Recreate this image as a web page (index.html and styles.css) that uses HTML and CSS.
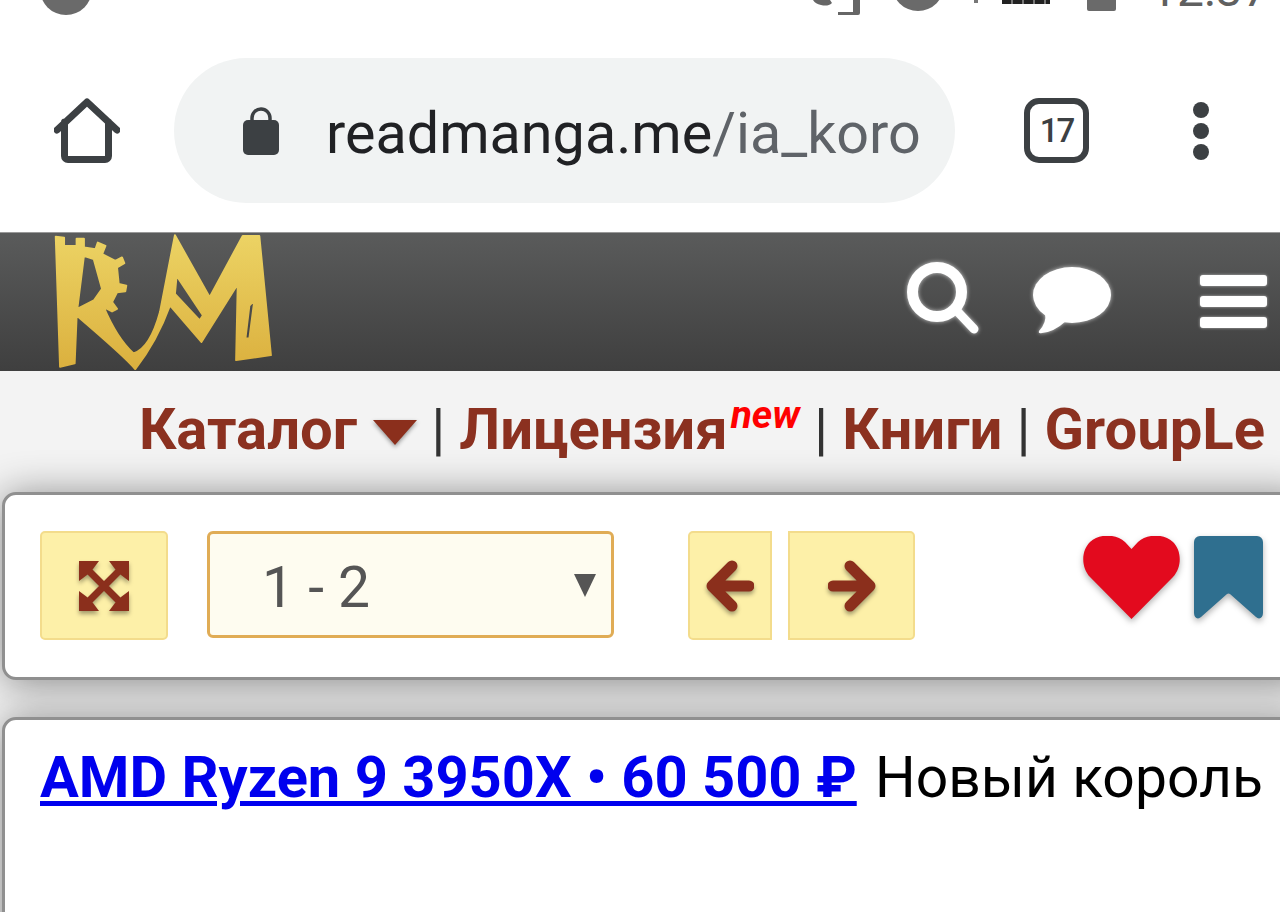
FILE: index.html
```html
<!DOCTYPE html>
<html lang="ru">
<head>
    <meta charset="UTF-8">
    <meta name="viewport" content="width=device-width, initial-scale=1.0">
    <title>readmanga.me</title>
    <link rel="stylesheet" href="styles.css">
</head>
<body>
    <div class="status-bar">
        <span class="status-dot status-dot-left"></span>
        <svg class="status-sim" viewBox="0 0 47 15"><path d="M0 0H17L19 3C16 6 12 6 8 5 4 4 2 3 0 0ZM40 0H47V13Q47 15 45 15H25V12H40Z" fill="#666"/></svg>
        <span class="status-dot status-dot-right"></span>
        <span class="status-tick"></span>
        <span class="status-signal"></span>
        <span class="status-battery"></span>
        <span class="status-time">12:37</span>
    </div>

    <div class="toolbar">
        <svg class="home-icon" viewBox="0 0 66 66"><path d="M3 32 33 4 63 32M10.500 24V58a3.500 3.500 0 0 0 3.500 3.500H51a3.500 3.500 0 0 0 3.500-3.500V24" fill="none" stroke="#3c4043" stroke-width="7" stroke-linecap="round" stroke-linejoin="round"/></svg>
        <div class="url-pill">
            <svg class="lock-icon" viewBox="0 0 38 48"><path d="M10 14V11a9 9 0 0 1 18 0v3" fill="none" stroke="#3c4043" stroke-width="3.500"/><rect x="1" y="13" width="36" height="35" rx="5" fill="#3c4043"/></svg>
            <span class="url-text"><span class="url-host">readmanga.me</span>/ia_koro</span>
        </div>
        <div class="tabs-count">17</div>
        <div class="menu-dots"><span></span><span></span><span></span></div>
    </div>

    <header class="site-header">
        <svg class="logo" viewBox="150 21 675 417">
            <defs>
                <linearGradient id="logoFill" x1="0" y1="0" x2="0" y2="1">
                    <stop offset="0" stop-color="#ecd364"/>
                    <stop offset="1" stop-color="#dbb03e"/>
                </linearGradient>
            </defs>
            <path fill="url(#logoFill)" stroke="url(#logoFill)" stroke-width="6" stroke-linejoin="round" fill-rule="evenodd" d="M165 32 190 35 190 60 228 60 228 38 250 38 250 65 285 70 292 50 315 60 305 85 345 105 365 95 372 112 350 125 355 175 378 180 375 197 350 200 335 230 350 250 335 258 310 245Q350 340 400 385 450 370 480 260L525 28 630 215 730 30 780 30 815 390 710 405 715 175 605 350 510 240Q470 350 405 432 380 400 228 270L222 415 178 425ZM250 90 280 100 305 190 280 225 230 250ZM530 150 610 270 600 285 525 205ZM765 225 750 340 738 340 750 240Z"/>
        </svg>
        <svg class="search-icon" viewBox="0 0 76 76"><circle cx="32" cy="30" r="24.500" fill="none" stroke="#fff" stroke-width="11"/><path d="M51 48 69 67" stroke="#fff" stroke-width="9" stroke-linecap="round"/></svg>
        <svg class="chat-icon" viewBox="0 0 82 72"><ellipse cx="42" cy="29" rx="39" ry="28" fill="#fff"/><path d="M15 48Q17 56 9 65 8 68 12 67 24 66 36 55Z" fill="#fff"/></svg>
        <div class="burger"><span></span><span></span><span></span></div>
    </header>

    <nav class="site-nav">
        <a href="#">Каталог</a>
        <span class="caret"></span>
        <span class="sep">|</span>
        <a href="#">Лицензия</a><sup class="new-mark">new</sup>
        <span class="sep">|</span>
        <a href="#">Книги</a>
        <span class="sep">|</span>
        <a href="#">GroupLe</a>
    </nav>

    <main class="content">
        <section class="card reader-bar">
            <button class="btn btn-full">
                <svg class="expand-icon" viewBox="0 0 50 50">
                    <path d="M8 8 42 42M42 8 8 42" stroke="#8b2f1c" stroke-width="7"/>
                    <path d="M0 0H20L14 8 8 14 0 20ZM50 0H30L36 8 42 14 50 20ZM0 50H20L14 42 8 36 0 30ZM50 50H30L36 42 42 36 50 30Z" fill="#8b2f1c"/>
                </svg>
            </button>
            <div class="select-wrap">
                <select class="page-select"><option>1 - 2</option></select>
            </div>
            <button class="btn btn-prev">
                <svg class="arrow-icon" viewBox="0 0 48 52"><path d="M26 6 6 26 26 46M6 26H43" fill="none" stroke="#8b2f1c" stroke-width="11" stroke-linecap="round" stroke-linejoin="round"/></svg>
            </button>
            <button class="btn btn-next">
                <svg class="arrow-icon" viewBox="0 0 48 52"><path d="M22 6 42 26 22 46M42 26H5" fill="none" stroke="#8b2f1c" stroke-width="11" stroke-linecap="round" stroke-linejoin="round"/></svg>
            </button>
            <svg class="heart-icon" viewBox="0 0 97 83"><path d="M48.500 83 7 41C-2 31-2 15 7 6 17-3 33-2 42 6L48.500 13 55 6C64-2 80-3 90 6 99 15 99 31 90 41Z" fill="#e30a1e"/></svg>
            <svg class="bookmark-icon" viewBox="0 0 69 83"><path d="M6 0H63A6 6 0 0 1 69 6V77C69 82 65 84 62 81L36 58Q34.500 57 33 58L7 81C4 84 0 82 0 77V6A6 6 0 0 1 6 0Z" fill="#2f6f8f"/></svg>
        </section>

        <section class="card promo">
            <a class="promo-link" href="#">AMD Ryzen 9 3950X • 60 500 ₽</a> <span class="promo-text">Новый король</span>
        </section>
    </main>
</body>
</html>
```

FILE: styles.css
```css
html, body {
    margin: 0;
    height: 912px;
    overflow: hidden;
}
body {
    background: #fff;
    font-family: Roboto, "Liberation Sans", sans-serif;
}

/* phone status bar, only its lower edge is in the picture */
.status-bar {
    display: flex;
    align-items: flex-end;
    height: 16px;
    overflow: hidden;
}
.status-dot {
    width: 52px;
    height: 52px;
    border-radius: 50%;
    background: #6a6a6a;
}
.status-dot-left {
    margin: 0 721px 1px 40px;
}
.status-sim {
    width: 47px;
    height: 15px;
    margin-bottom: 1px;
}
.status-dot-right {
    margin: 0 30px 5px 32px;
}
.status-tick {
    width: 4px;
    height: 3px;
    margin: 0 24px 13px 0;
    background: #777;
}
.status-signal {
    width: 48px;
    height: 4px;
    margin-bottom: 12px;
    background: repeating-linear-gradient(90deg, #222 0 9px, #777 9px 11px);
}
.status-battery {
    width: 29px;
    height: 30px;
    margin: 0 34px 5px 37px;
    background: #6a6a6a;
    border-radius: 2px;
}
.status-time {
    margin-bottom: 2px;
    font-size: 48px;
    line-height: 48px;
    color: #606060;
}

.toolbar {
    display: flex;
    align-items: center;
    height: 145px;
    margin-top: 42px;
    margin-bottom: 29px;
}
.home-icon {
    width: 66px;
    height: 66px;
    margin: 0 54px;
}
.url-pill {
    display: flex;
    align-items: center;
    width: 781px;
    height: 145px;
    border-radius: 73px;
    background: #f1f3f3;
    box-sizing: border-box;
    padding-left: 68px;
    overflow: hidden;
}
.lock-icon {
    width: 38px;
    height: 48px;
    margin-right: 46px;
}
.url-text {
    margin-top: 6px;
    font-size: 57.5px;
    color: #5f6368;
    white-space: nowrap;
}
.url-host {
    color: #202124;
}
.tabs-count {
    width: 65px;
    height: 65px;
    margin-left: 69px;
    box-sizing: border-box;
    border: 6px solid #3c4043;
    border-radius: 15px;
    font-size: 33px;
    font-weight: 500;
    letter-spacing: -2px;
    line-height: 53px;
    text-align: center;
    color: #3c4043;
}
.menu-dots {
    display: flex;
    flex-direction: column;
    gap: 5px;
    margin-left: 104px;
}
.menu-dots span {
    width: 16px;
    height: 16px;
    border-radius: 50%;
    background: #3c4043;
}

.site-header {
    display: flex;
    align-items: flex-start;
    height: 139px;
    background: linear-gradient(#5a5b5b, #3f3f3f);
    border-top: 1px solid #999;
    box-sizing: border-box;
}
.logo {
    width: 225px;
    height: 138px;
    margin-left: 50px;
    filter: blur(.7px);
}
.search-icon, .chat-icon {
    filter: drop-shadow(0 0 2px rgba(255, 255, 255, .7));
}
.search-icon {
    width: 76px;
    height: 76px;
    margin: 29px 0 0 630px;
}
.chat-icon {
    width: 82px;
    height: 72px;
    margin: 33px 0 0 49px;
}
.burger {
    display: flex;
    flex-direction: column;
    gap: 10px;
    margin: 42px 0 0 88px;
}
.burger span {
    width: 67px;
    height: 11px;
    border-radius: 3px;
    background: #fff;
    box-shadow: 0 0 3px rgba(255, 255, 255, .6);
}

.site-nav {
    display: flex;
    justify-content: flex-end;
    align-items: baseline;
    gap: 14px;
    height: 121px;
    padding: 24px 15px 0 0;
    box-sizing: border-box;
    background: #f3f3f3;
    font-size: 58px;
    white-space: nowrap;
}
.site-nav a {
    color: #8b3120;
    font-weight: 700;
    text-decoration: none;
}
.sep {
    color: #333;
}
.caret {
    align-self: flex-start;
    width: 0;
    height: 0;
    margin: 25px 0 0 2px;
    border: 22px solid transparent;
    border-top: 25px solid #8b2f1c;
    border-bottom: 0;
    filter: drop-shadow(0 2px 2px rgba(0, 0, 0, .4));
}
.new-mark {
    align-self: flex-start;
    margin-left: -11px;
    color: #f00;
    font-size: 39px;
    font-style: italic;
    font-weight: 700;
    line-height: 40px;
}

.content {
    background: #f3f3f3;
    height: 420px;
    padding-left: 2px;
}
.card {
    position: relative;
    margin-right: -30px;
    background: #fff;
    border: 3px solid #909090;
    border-radius: 14px;
    box-sizing: border-box;
    box-shadow: 0 3px 40px rgba(0, 0, 0, .45);
}

.reader-bar {
    display: flex;
    align-items: flex-start;
    height: 188px;
    margin-bottom: 37px;
    padding: 36px 0 0 35px;
}
.btn {
    display: flex;
    align-items: center;
    justify-content: center;
    height: 109px;
    padding: 0;
    background: #fdf0a8;
    border: 2px solid #f3dc8c;
    border-radius: 5px;
    box-sizing: border-box;
}
.btn-full {
    width: 128px;
}
.expand-icon {
    width: 50px;
    height: 50px;
    filter: drop-shadow(0 3px 2px rgba(0, 0, 0, .35));
}
.select-wrap {
    position: relative;
    margin: 0 74px 0 39px;
}
.select-wrap::after {
    content: "";
    position: absolute;
    top: 43px;
    right: 18px;
    border: 11px solid transparent;
    border-top: 23px solid #555;
    border-bottom: 0;
}
.page-select {
    display: block;
    width: 407px;
    height: 107px;
    padding: 5px 0 0 52px;
    appearance: none;
    background: #fefcf0;
    border: 3px solid #e0ac55;
    border-radius: 6px;
    box-sizing: border-box;
    color: #555;
    font-family: Roboto, sans-serif;
    font-size: 57px;
}
.btn-prev {
    width: 84px;
    margin-right: 16px;
    border-radius: 5px 0 0 5px;
}
.btn-next {
    width: 127px;
    border-radius: 0 5px 5px 0;
}
.arrow-icon {
    width: 48px;
    height: 52px;
    filter: drop-shadow(0 3px 2px rgba(0, 0, 0, .35));
}
.heart-icon, .bookmark-icon {
    height: 83px;
    margin-top: 5px;
    filter: drop-shadow(0 3px 3px rgba(0, 0, 0, .3));
}
.heart-icon {
    width: 97px;
    margin-left: 168px;
}
.bookmark-icon {
    width: 69px;
    margin-left: 14px;
}

.promo {
    height: 240px;
    padding: 23px 0 0 35px;
    font-size: 57.85px;
    white-space: nowrap;
    color: #000;
}
.promo-link {
    color: #00e;
    font-weight: 700;
    text-decoration-thickness: 5px;
    text-underline-offset: 4px;
}
.promo-text {
    margin-left: 4px;
    font-size: 57px;
}
```
